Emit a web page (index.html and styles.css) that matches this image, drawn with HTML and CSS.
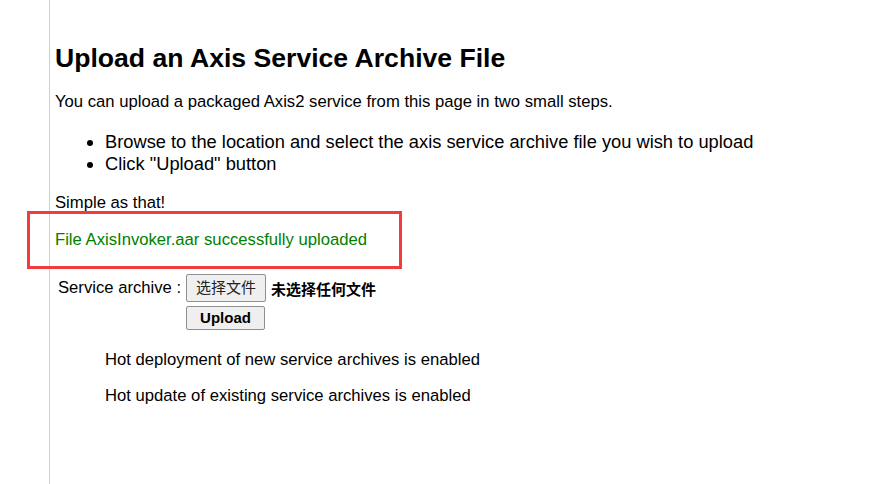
FILE: index.html
```html
<!DOCTYPE html>
<html>
<head>
<meta charset="utf-8">
<link rel="stylesheet" href="styles.css">
</head>
<body>
<div class="page">
  <div class="side"></div>
  <div class="content">
    <h1 class="title">Upload an Axis Service Archive File</h1>
    <p class="intro">You can upload a packaged Axis2 service from this page in two small steps.</p>
    <ul class="steps">
      <li>Browse to the location and select the axis service archive file you wish to upload</li>
      <li>Click "Upload" button</li>
    </ul>
    <p class="simple">Simple as that!</p>
    <div class="status-wrap">
      <p class="status">File AxisInvoker.aar successfully uploaded</p>
      <div class="annot"></div>
    </div>
    <form class="upload">
      <div class="row">
        <span class="label">Service archive :</span>
        <span class="file"><span class="btn btn-file">选择文件</span><span class="nofile">未选择任何文件</span></span>
      </div>
      <div class="row">
        <span class="label"></span>
        <span class="btn btn-up">Upload</span>
      </div>
    </form>
    <p class="note">Hot deployment of new service archives is enabled</p>
    <p class="note">Hot update of existing service archives is enabled</p>
  </div>
</div>
</body>
</html>
```
FILE: styles.css
```css
html, body { margin: 0; padding: 0; background: #fff; }
body { font-family: "Liberation Sans", Arial, sans-serif; color: #000; }
.page { display: flex; min-height: 484px; }
.side { width: 49px; border-right: 1px solid #cfcfcf; flex: none; }
.content { padding: 0 0 0 5px; flex: 1; }
.title { font-size: 26.6px; font-weight: bold; margin: 43px 0 0 0; line-height: 30px; }
.intro { font-size: 16.67px; margin: 19px 0 0 0; line-height: 20px; }
.steps { font-size: 18.3px; margin: 19px 0 0 0; padding-left: 50px; line-height: 22px; }
.simple { font-size: 16.67px; margin: 18px 0 0 0; line-height: 20px; }
.status-wrap { position: relative; }
.status { font-size: 16.67px; color: #008000; margin: 17px 0 0 0; line-height: 20px; }
.annot { position: absolute; left: -28px; top: -19px; width: 369px; height: 52px; border: 3px solid #f33b3b; }
.upload { margin-top: 24px; display: flex; flex-direction: column; gap: 4px; }
.row { display: flex; align-items: center; }
.label { width: 131px; font-size: 16.67px; padding-left: 3px; box-sizing: border-box; }
.file { display: flex; align-items: center; gap: 5px; }
.btn { display: inline-block; border: 1px solid #8f8f8f; border-radius: 2px; background: #efefef; box-sizing: border-box; text-align: center; }
.btn-file { width: 80px; height: 28px; font-size: 15px; line-height: 24px; font-family: "Noto Sans CJK SC", "Liberation Sans", sans-serif; color: #222; }
.nofile { font-size: 15px; font-weight: bold; font-family: "Noto Sans CJK SC", sans-serif; }
.btn-up { font-family: "Liberation Sans", Arial, sans-serif; font-weight: bold; font-size: 15px; width: 79px; height: 24px; line-height: 21px; }
.note { font-size: 16.67px; margin: 20px 0 0 50px; line-height: 20px; }
.note + .note { margin-top: 16px; }
```
